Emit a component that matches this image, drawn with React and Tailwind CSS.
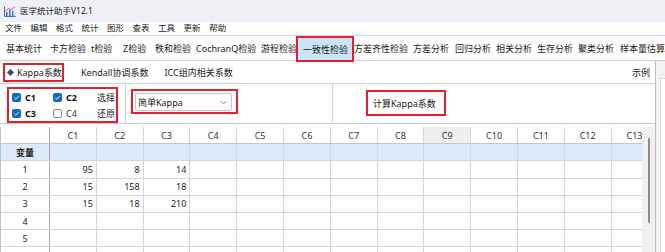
import React from "react";

const menus = ["文件", "编辑", "格式", "统计", "图形", "查表", "工具", "更新", "帮助"];

const tools = [
  ["基本统计", 44],
  ["卡方检验", 41],
  ["t检验", 32],
  ["Z检验", 32],
  ["秩和检验", 41],
  ["CochranQ检验", 65],
  ["游程检验", 35],
  ["一致性检验", 58, true],
  ["方差齐性检验", 59],
  ["方差分析", 42],
  ["回归分析", 41],
  ["相关分析", 41],
  ["生存分析", 41],
  ["聚类分析", 42],
  ["样本量估算", 50],
];

const cols = ["C1", "C2", "C3", "C4", "C5", "C6", "C7", "C8", "C9", "C10", "C11", "C12", "C13"];

const rows = [
  ["1", [95, 8, 14]],
  ["2", [15, 158, 18]],
  ["3", [15, 18, 210]],
  ["4", []],
  ["5", []],
  ["", []],
];

function AppIcon() {
  return (
    <svg width="12" height="11" viewBox="0 0 12 11">
      <rect x="2" y="6" width="1.6" height="4" fill="#3d7be0" />
      <rect x="5" y="4" width="1.6" height="6" fill="#3d7be0" />
      <rect x="8" y="5" width="1.6" height="5" fill="#3d7be0" />
      <path d="M0.6 0.5 V10.4 H11.6" stroke="#2d5fc4" strokeWidth="1" fill="none" />
      <path d="M1.5 5 L4.5 2.5 L7 4 L11 0.8" stroke="#e0408a" strokeWidth="1" fill="none" />
    </svg>
  );
}

function Check({ on, label }) {
  return (
    <div className="flex items-center gap-[4px]">
      {on ? (
        <span className="w-[9px] h-[9px] rounded-[2px] bg-[#0f6cbd] flex items-center justify-center">
          <svg width="7" height="7" viewBox="0 0 8 8">
            <path d="M1.3 4.2 L3.2 6 L6.8 2" stroke="white" strokeWidth="1" fill="none" />
          </svg>
        </span>
      ) : (
        <span className="w-[9px] h-[9px] rounded-[2px] border border-[#8a8a8a] bg-white" />
      )}
      <span className={on ? "font-bold text-[#111]" : "text-[#333]"}>{label}</span>
    </div>
  );
}

export default function App() {
  return (
    <div className="w-[665px] h-[252px] overflow-hidden bg-white text-[9px] leading-none text-[#1a1a1a] whitespace-nowrap font-['Noto_Sans','Noto_Sans_CJK_SC',sans-serif]">
      {/* title bar */}
      <div className="h-[22px] bg-[#eef0f5] flex items-center pl-[4px] gap-[4px] pt-[1px]">
        <AppIcon />
        <span className="text-[8.5px] text-[#222]">医学统计助手V12.1</span>
      </div>

      {/* menu bar */}
      <div className="h-[14px] flex items-center pl-[5px] gap-[8.5px] border-b border-[#d6d6d6] text-[8.5px]">
        {menus.map((m) => (
          <span key={m}>{m}</span>
        ))}
      </div>

      {/* toolbar */}
      <div className="h-[25px] flex items-center pl-[6px] border-b border-[#cfcfcf]">
        {tools.map(([t, w, sel]) =>
          sel ? (
            <div
              key={t}
              className="self-start shrink-0 h-[26px] border-2 border-[#e5202e] bg-[#cce4f7] flex items-center pl-[5px] relative z-10"
              style={{ width: w }}
            >
              {t}
            </div>
          ) : (
            <div key={t} className="shrink-0" style={{ width: w }}>
              {t}
            </div>
          )
        )}
      </div>

      <div className="flex">
        {/* main column */}
        <div className="w-[656px] shrink-0 border-r border-[#bdbdbd]">
          {/* sub tabs */}
          <div className="h-[23px] flex items-center border-b border-[#d0d0d0] pr-[5px]">
            <div className="ml-[3px] shrink-0 w-[61px] h-[19px] border-2 border-[#e5202e] flex items-center pl-[3px] gap-[4px]">
              <span className="w-[5px] h-[5px] bg-[#2f4b78] rotate-45 shrink-0" />
              <span>Kappa系数</span>
            </div>
            <span className="ml-[17px]">Kendall协调系数</span>
            <span className="ml-[16px]">ICC组内相关系数</span>
            <span className="ml-auto">示例</span>
          </div>

          {/* options panel */}
          <div className="h-[40px] flex border-b border-[#c8c8c8]">
            <div className="w-[126px] border-r border-[#d0d0d0] pl-[7px] pt-[3px]">
              <div className="w-[111px] h-[36px] border-2 border-[#e5202e] grid grid-cols-[41px_44px_auto] content-center gap-y-[7px] pl-[3px]">
                <Check on label="C1" />
                <Check on label="C2" />
                <span>选择</span>
                <Check on label="C3" />
                <Check label="C4" />
                <span>还原</span>
              </div>
            </div>
            <div className="w-[207px] border-r border-[#d0d0d0] pl-[5px] pt-[5px]">
              <div className="w-[107px] h-[25px] border-2 border-[#e5202e] pl-[2px] pt-[2px]">
                <div className="w-[97px] h-[18px] border border-[#c4c4c4] rounded-[2px] flex items-center pl-[2px] pr-[4px] bg-white">
                  <span>简单Kappa</span>
                  <svg className="ml-auto" width="7" height="5" viewBox="0 0 7 5">
                    <path d="M0.8 1 L3.5 3.8 L6.2 1" stroke="#777" strokeWidth="0.9" fill="none" />
                  </svg>
                </div>
              </div>
            </div>
            <div className="flex-1 pl-[33px] pt-[6px]">
              <div className="w-[80px] h-[26px] border-2 border-[#e5202e] flex items-center pl-[5px] bg-white">
                计算Kappa系数
              </div>
            </div>
          </div>

          <div className="h-[3px]" />

          {/* grid */}
          <div className="flex">
            <div className="w-[642px] overflow-hidden border-l border-[#c2c2c2]">
              <div className="flex h-[17.2px] border-b border-[#c6c6c6]">
                <div className="w-[49px] shrink-0 border-r border-[#a8a8a8]" />
                {cols.map((c) => (
                  <div
                    key={c}
                    className={`w-[46.8px] shrink-0 border-r border-[#d4d4d4] flex items-center justify-center text-[#333] ${
                      c === "C9" ? "bg-[#efefef]" : ""
                    }`}
                  >
                    {c}
                  </div>
                ))}
              </div>
              <div className="flex h-[17.2px] border-b border-[#c9d6e4] bg-[#dcebfb]">
                <div className="w-[49px] shrink-0 border-r border-[#a8a8a8] flex items-center justify-center font-bold text-[#222]">
                  变量
                </div>
                {cols.map((c) => (
                  <div key={c} className="w-[46.8px] shrink-0 border-r border-[#cfdbe8]" />
                ))}
              </div>
              {rows.map(([n, vals], i) => (
                <div key={i} className="flex h-[17.2px] border-b border-[#d6d6d6]">
                  <div className="w-[49px] shrink-0 border-r border-[#a8a8a8] flex items-center justify-center text-[#222]">
                    {n}
                  </div>
                  {cols.map((c, j) => (
                    <div
                      key={c}
                      className="w-[46.8px] shrink-0 border-r border-[#d4d4d4] flex items-center justify-end pr-[3px] text-[#222]"
                    >
                      {vals[j] ?? ""}
                    </div>
                  ))}
                </div>
              ))}
            </div>
            {/* scrollbar */}
            <div className="flex-1 h-[130px] bg-[#efefef] flex justify-center">
              <div className="w-[2px] h-[85px] mt-[11px] rounded-full bg-[#8a8a8a]" />
            </div>
          </div>
        </div>

        {/* right strip */}
        <div className="flex-1 bg-[#f2f2f2] pl-[4px] pt-[17px]">
          <div className="h-full bg-white border-l border-t border-[#dadada]" />
        </div>
      </div>
    </div>
  );
}
